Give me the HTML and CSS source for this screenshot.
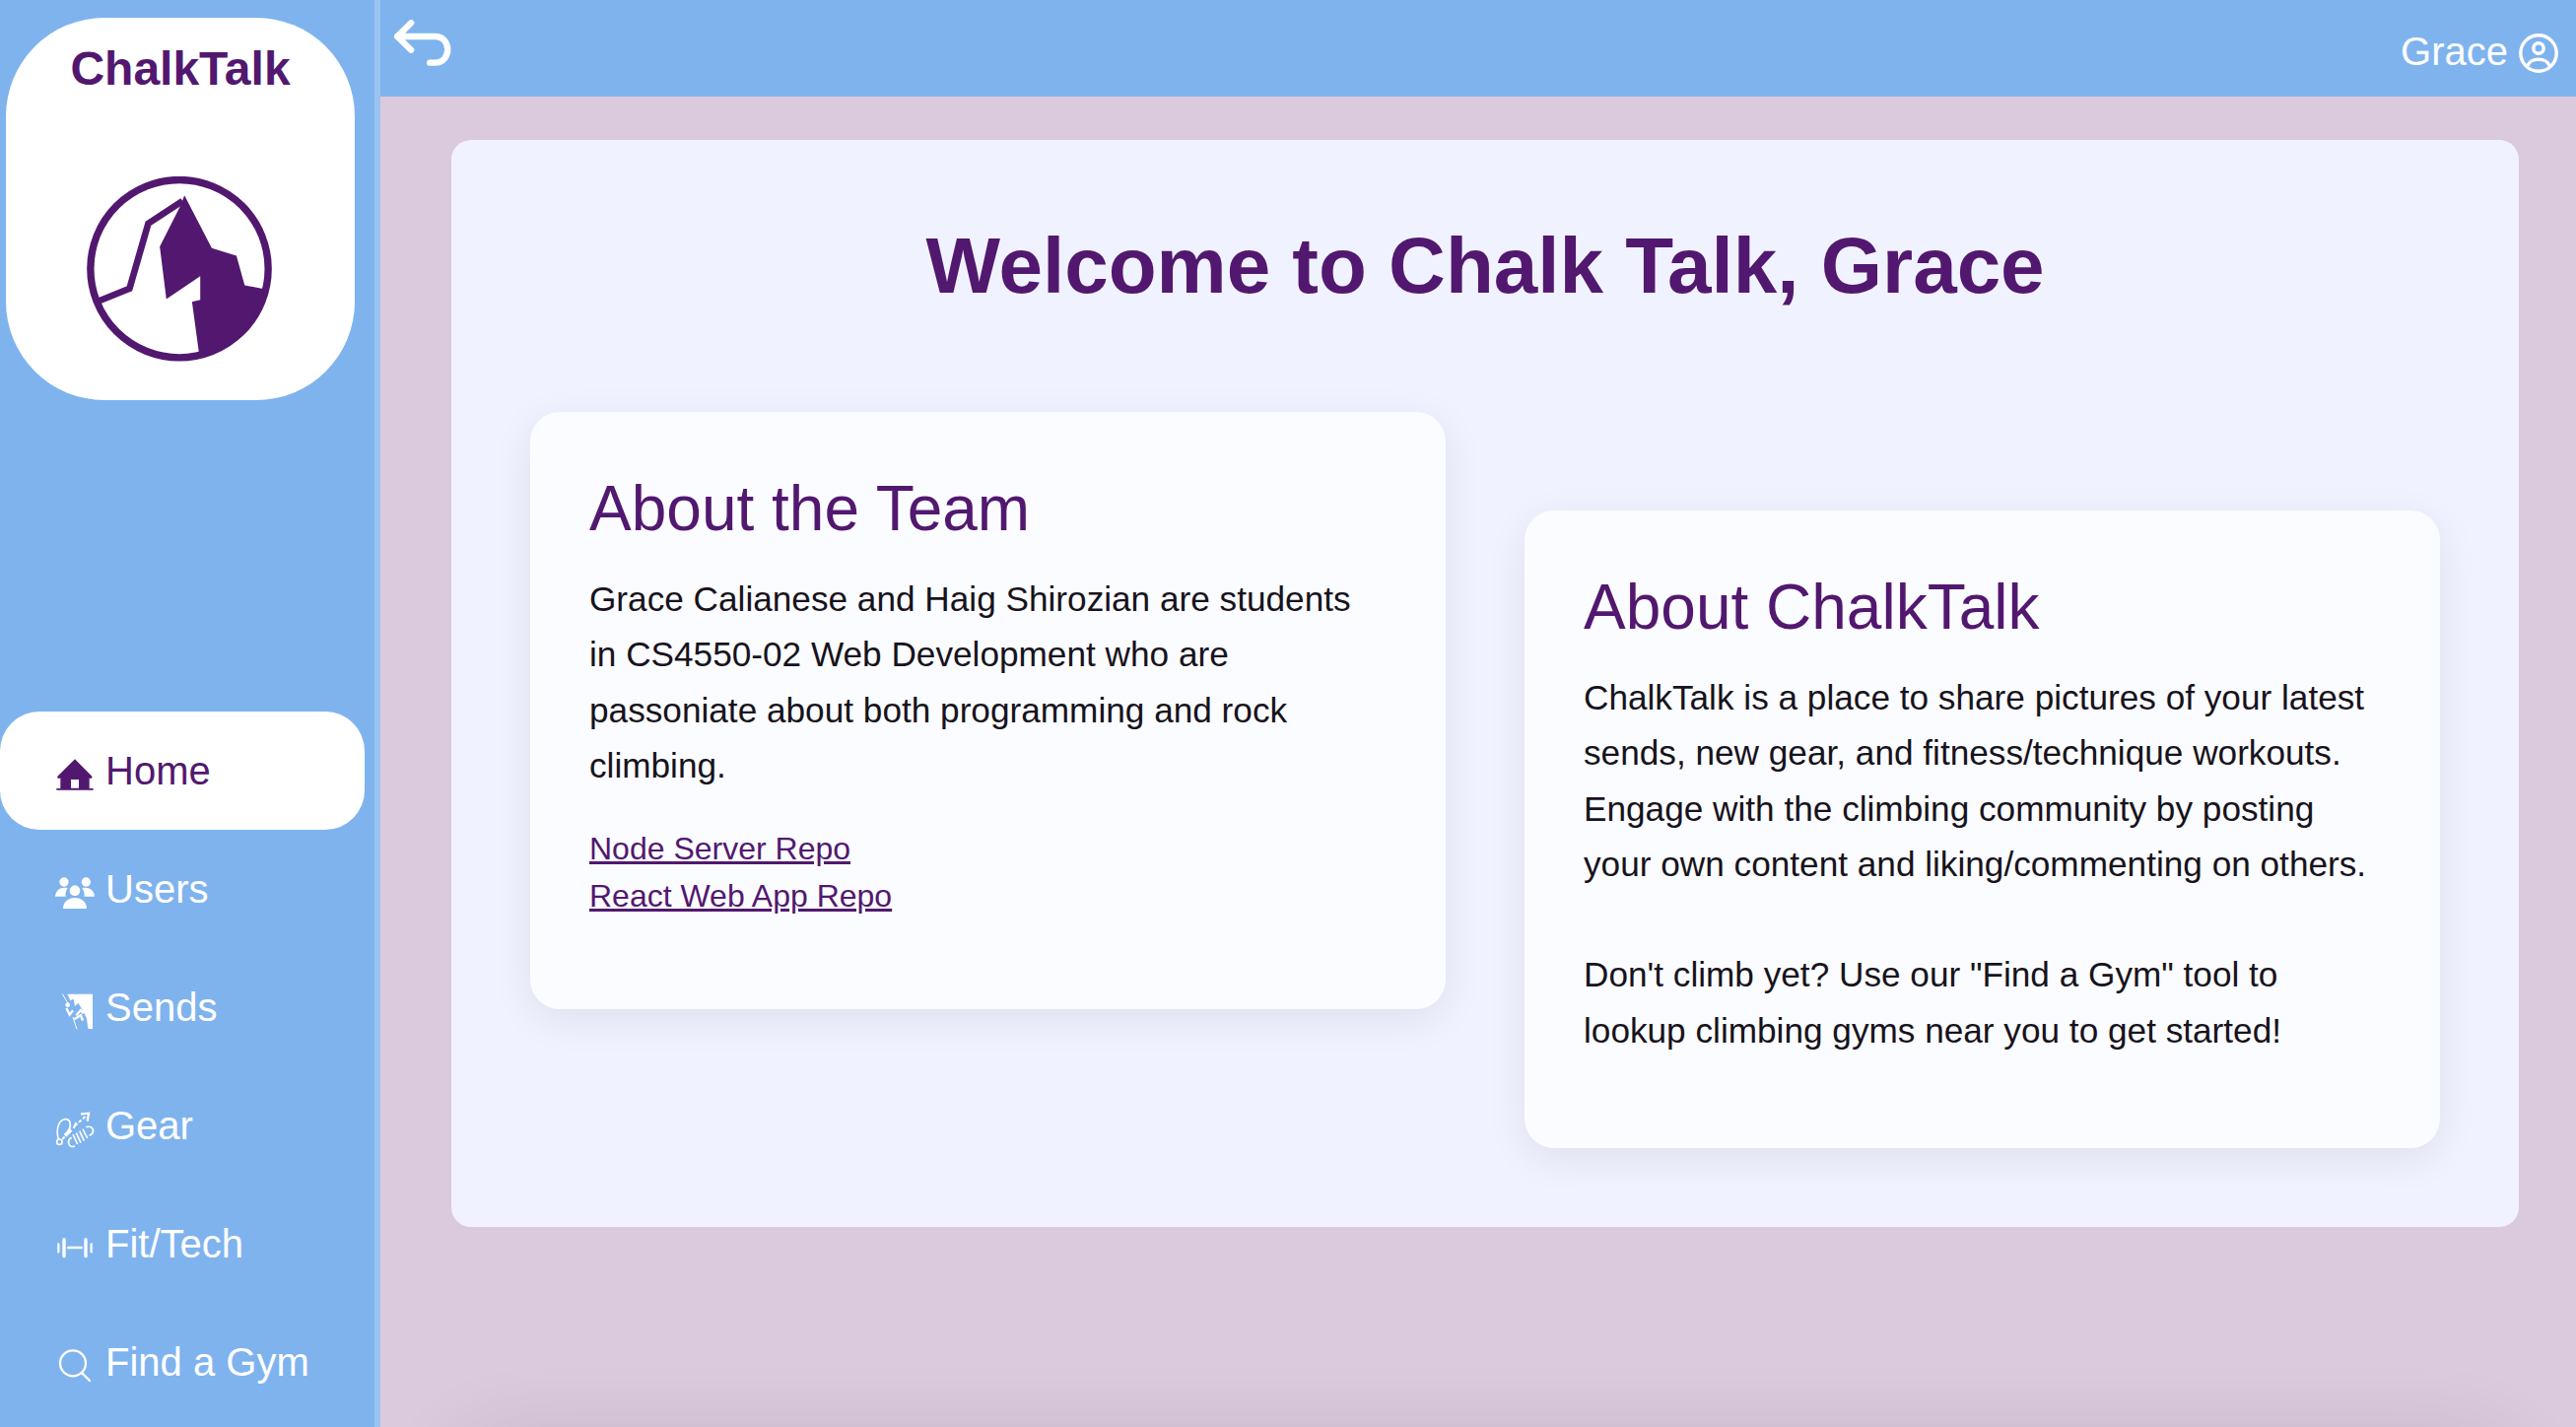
FILE: index.html
```html
<!DOCTYPE html>
<html lang="en">
<head>
  <meta charset="utf-8">
  <title>ChalkTalk</title>
  <link rel="stylesheet" href="styles.css">
</head>
<body>
  <div class="page">
    <aside class="sidebar">
      <div class="logo">
        <div class="logo-name">ChalkTalk</div>
        <svg class="logo-mark" viewBox="265 537 563 563">
          <circle cx="546.5" cy="817.5" r="270" fill="none" stroke="#52186f" stroke-width="22"/>
          <path fill="#52186f" d="M562 595L645 755L720 778L745 868L808 880A270 270 0 0 1 607 1080L585 918L610 912L610 840L507 910L487 750L548 630Z"/>
          <polyline fill="none" stroke="#52186f" stroke-width="20" points="556 612 452 680 395 878 303 915"/>
        </svg>
      </div>
      <nav class="nav">
        <a class="nav-item active" href="#">
          <svg class="nav-icon" viewBox="168 195 120 120">
            <path fill="currentColor" fill-rule="evenodd" d="M228 208L280 260V266H272V297H284V302H172V297H184V266H175V260ZM216 270V296H240V270Z"/>
          </svg>
          Home
        </a>
        <a class="nav-item" href="#">
          <svg class="nav-icon" viewBox="168 557 120 120">
            <circle cx="195" cy="584" r="14" fill="currentColor"/>
            <circle cx="262" cy="584" r="14" fill="currentColor"/>
            <circle cx="228" cy="610" r="16" fill="currentColor"/>
            <path fill="currentColor" d="M168 628C170 606 186 598 206 602C200 612 198 620 200 628ZM288 628C286 606 270 598 250 602C256 612 258 620 256 628ZM192 665C192 645 208 632 228 632C248 632 264 645 264 665Z"/>
          </svg>
          Users
        </a>
        <a class="nav-item" href="#">
          <svg class="nav-icon" viewBox="168 917 120 120">
            <path fill="currentColor" d="M205 925H282V1032L268 1030L264 1000L252 975L238 952L228 962L224 940L214 945Z"/>
            <path fill="none" stroke="currentColor" stroke-width="3" d="M190 925L212 962M222 995L234 1032"/>
            <circle cx="206" cy="958" r="7" fill="currentColor"/>
            <path fill="none" stroke="currentColor" stroke-width="7" d="M202 968L212 988L222 975M232 990L246 974L254 984M226 1002L246 990L252 1006"/>
          </svg>
          Sends
        </a>
        <a class="nav-item" href="#">
          <svg class="nav-icon" viewBox="168 75 120 120">
            <g fill="none" stroke="currentColor">
              <path stroke-width="5" d="M178 166C168 130 182 102 202 104C216 106 218 128 206 142"/>
              <circle cx="181" cy="173" r="8" stroke-width="5"/>
              <path stroke-width="11" d="M198 154L216 136"/>
              <path stroke-width="6" d="M224 132L232 114"/>
              <path stroke-width="6" stroke-dasharray="10 6" d="M190 165L198 156M228 124L262 94"/>
              <path stroke-width="7" d="M246 88L270 86L266 110"/>
              <path stroke-width="5" d="M222 150L236 180M232 146L246 176M242 140L256 170M252 134L266 162M262 128C284 122 292 144 272 154M218 160C202 168 208 194 228 186"/>
            </g>
          </svg>
          Gear
        </a>
        <a class="nav-item" href="#">
          <svg class="nav-icon" viewBox="168 437 120 120">
            <g fill="none" stroke="currentColor" stroke-linecap="round">
              <path stroke-width="7" d="M178 486V510M278 486V510"/>
              <path stroke-width="10" d="M195 472V523M261 472V523"/>
              <path stroke-width="8" d="M208 497H248"/>
            </g>
          </svg>
          Fit/Tech
        </a>
        <a class="nav-item" href="#">
          <svg class="nav-icon" viewBox="168 798 120 120">
            <g fill="none" stroke="currentColor" stroke-width="7" stroke-linecap="round">
              <circle cx="222" cy="850" r="39"/>
              <path d="M250 880L273 903"/>
            </g>
          </svg>
          Find a Gym
        </a>
      </nav>
    </aside>
    <div class="content">
      <header class="topbar">
        <svg class="back-icon" viewBox="50 55 185 150">
          <path fill="none" stroke="#fff" stroke-width="19" stroke-linecap="round" stroke-linejoin="round" d="M110 71L68 112L110 153M68 112H183C234 112 234 192 183 192H167"/>
        </svg>
        <div class="user">
          Grace
          <svg class="user-icon" viewBox="0 0 40 40">
            <g fill="none" stroke="#fff" stroke-width="3.4">
              <circle cx="20" cy="20" r="18.2"/>
              <circle cx="20" cy="15" r="5.2"/>
              <path d="M9 33C11 24 29 24 31 33"/>
            </g>
          </svg>
        </div>
      </header>
      <main class="main">
        <section class="panel">
          <h1 class="welcome">Welcome to Chalk Talk, Grace</h1>
          <div class="cards">
            <div class="card">
              <h2>About the Team</h2>
              <p>Grace Calianese and Haig Shirozian are students in CS4550-02 Web Development who are passoniate about both programming and rock climbing.</p>
              <div class="links">
                <a href="#">Node Server Repo</a><br>
                <a href="#">React Web App Repo</a>
              </div>
            </div>
            <div class="card card-low">
              <h2>About ChalkTalk</h2>
              <p>ChalkTalk is a place to share pictures of your latest sends, new gear, and fitness/technique workouts. Engage with the climbing community by posting your own content and liking/commenting on others.<br><br>Don't climb yet? Use our "Find a Gym" tool to lookup climbing gyms near you to get started!</p>
            </div>
          </div>
        </section>
        <section class="panel-next"></section>
      </main>
    </div>
  </div>
</body>
</html>
```

FILE: styles.css
```css
* {
  box-sizing: border-box;
}
body {
  margin: 0;
  font-family: "Liberation Sans", Arial, sans-serif;
  color: #17131c;
  background: #dbcadd;
}
.page {
  display: flex;
  height: 100vh;
  overflow: hidden;
}
.sidebar {
  flex: 0 0 386px;
  background: #7fb3ee;
  border-right: 6px solid #99c4f2;
  padding-top: 18px;
}
.logo {
  width: 354px;
  height: 388px;
  margin-left: 6px;
  background: #fff;
  border-radius: 100px;
  text-align: center;
  padding-top: 25px;
}
.logo-name {
  font-size: 48px;
  font-weight: bold;
  line-height: 54px;
  color: #52186f;
}
.logo-mark {
  display: block;
  width: 188px;
  height: 188px;
  margin: 82px 0 0 82px;
}
.nav {
  margin-top: 316px;
}
.nav-item {
  display: flex;
  align-items: center;
  width: 370px;
  height: 120px;
  padding-left: 56px;
  border-radius: 40px;
  color: #fff;
  font-size: 40px;
  text-decoration: none;
}
.nav-item.active {
  background: #fff;
  color: #52186f;
}
.nav-icon {
  width: 40px;
  height: 40px;
  margin: 8px 11px 0 0;
}
.content {
  flex: 1;
  min-width: 0;
}
.topbar {
  display: flex;
  justify-content: space-between;
  height: 98px;
  background: #7fb3ee;
  padding: 18px 18px 0 11px;
}
.back-icon {
  width: 62px;
  height: 50px;
}
.user {
  display: flex;
  align-items: center;
  height: 68px;
  color: #fff;
  font-size: 40px;
}
.user-icon {
  width: 40px;
  height: 40px;
  margin-left: 11px;
  margin-top: 3px;
}
.main {
  padding: 44px 58px 0 72px;
}
.panel {
  height: 1103px;
  background: #f0f3ff;
  border-radius: 20px;
  padding: 82px 80px 80px;
}
.welcome {
  margin: 0 0 102px;
  font-size: 80px;
  line-height: 92px;
  text-align: center;
  color: #52186f;
}
.cards {
  display: grid;
  grid-template-columns: 1fr 1fr;
  column-gap: 80px;
  align-items: start;
}
.card {
  background: #fbfcff;
  border-radius: 30px;
  padding: 61px 60px 60px;
  box-shadow: 0 10px 40px rgba(0, 0, 0, 0.08);
  height: 606px;
}
.card-low {
  margin-top: 100px;
  height: 647px;
}
.card h2 {
  margin: 0 0 27px;
  font-size: 64px;
  font-weight: normal;
  line-height: 74px;
  color: #52186f;
}
.card p {
  margin: 0;
  font-size: 35.2px;
  line-height: 56.3px;
}
.links {
  margin-top: 32px;
  font-size: 32px;
  line-height: 48px;
}
.links a {
  color: #52186f;
}
.panel-next {
  height: 400px;
  margin: 230px 20px 0;
  border-radius: 20px;
  box-shadow: 0 0 90px rgba(50, 30, 70, 0.2);
}
```
